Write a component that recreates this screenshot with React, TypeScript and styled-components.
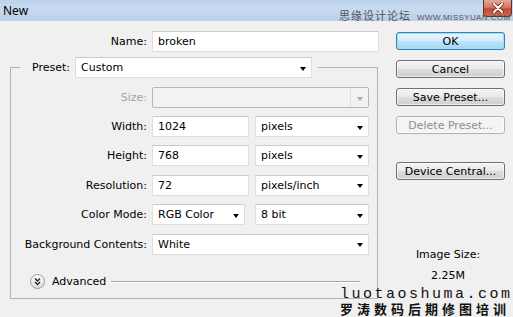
import React from 'react';
import styled, { createGlobalStyle } from 'styled-components';

const GlobalStyle = createGlobalStyle`
  html, body {
    margin: 0;
    padding: 0;
    background: #f0f0f0;
    overflow: hidden;
  }
  body {
    font-family: "DejaVu Sans", Tahoma, sans-serif;
    font-size: 11px;
    color: #000;
  }
`;

const Dialog = styled.div`
  position: relative;
  width: 513px;
  height: 317px;
  display: flex;
  flex-direction: column;
  background: #f0f0f0;
  overflow: hidden;
`;

const TitleBar = styled.div`
  position: relative;
  flex: none;
  height: 21px;
  display: flex;
  justify-content: space-between;
  padding: 0 1px 0 3px;
  background: linear-gradient(180deg, #bcd2eb 0%, #c8dbf0 45%, #b8cfe9 100%);
  .title {
    align-self: center;
    font-family: "Noto Sans", "Liberation Sans", sans-serif;
    font-size: 12px;
    color: #000;
    margin-top: -1px;
  }
`;

const CloseButton = styled.div`
  width: 29px;
  height: 17px;
  box-sizing: border-box;
  border: 1px solid #6e2b21;
  border-top: none;
  border-radius: 0 0 4px 4px;
  background: linear-gradient(180deg, #e6a797 0%, #d57a66 45%, #c24a34 55%, #cf6a4e 100%);
  display: flex;
  align-items: center;
  justify-content: center;
  svg { display: block; }
`;

const TopMark = styled.div`
  position: absolute;
  left: 339px;
  top: 7px;
  display: flex;
  align-items: baseline;
  gap: 6px;
  color: #555;
  pointer-events: none;
  .cn {
    font-family: "Noto Sans CJK SC", sans-serif;
    font-size: 11px;
    letter-spacing: 1px;
  }
  .url {
    font-family: "Liberation Sans", sans-serif;
    font-size: 8px;
    letter-spacing: 0.4px;
  }
`;

const BottomMark = styled.div`
  position: absolute;
  left: 340px;
  top: 287px;
  display: flex;
  flex-direction: column;
  color: #111;
  pointer-events: none;
  .en {
    font-family: "Liberation Mono", monospace;
    font-size: 15px;
    letter-spacing: 2.5px;
    line-height: 15px;
  }
  .cn {
    font-family: "Noto Sans CJK SC", sans-serif;
    font-size: 13px;
    font-weight: bold;
    letter-spacing: 4px;
    line-height: 14px;
  }
`;

const Body = styled.div`
  display: flex;
  flex: 1;
`;

const LeftPane = styled.div`
  width: 385px;
  padding-top: 10px;
  box-sizing: border-box;
`;

const RightPane = styled.div`
  width: 109px;
  margin-left: 11px;
  padding-top: 11px;
  display: flex;
  flex-direction: column;
  gap: 10px;
`;

const Row = styled.div<{ $outside?: boolean }>`
  display: grid;
  grid-template-columns: 136px auto;
  column-gap: 5px;
  align-items: center;
  height: 21px;
  margin-left: ${p => (p.$outside ? '11px' : '0')};
`;

const Label = styled.div<{ $disabled?: boolean }>`
  text-align: right;
  white-space: nowrap;
  color: ${p => (p.$disabled ? '#a3a3a3' : '#000')};
`;

const Fields = styled.div<{ $gap?: number }>`
  display: flex;
  gap: ${p => p.$gap ?? 6}px;
  align-items: center;
`;

const TextBox = styled.div<{ $w: number }>`
  width: ${p => p.$w}px;
  height: 21px;
  box-sizing: border-box;
  padding: 0 5px;
  line-height: 19px;
  background: #fff;
  border: 1px solid #dedede;
  border-top-color: #cbcbcb;
  white-space: nowrap;
`;

const SelectBox = styled.div<{ $w: number; $disabled?: boolean }>`
  width: ${p => p.$w}px;
  height: 21px;
  box-sizing: border-box;
  display: flex;
  align-items: center;
  background: ${p => (p.$disabled ? '#f2f2f2' : '#fff')};
  border: 1px solid ${p => (p.$disabled ? '#b7b7b7' : '#dedede')};
  border-top-color: ${p => (p.$disabled ? '#b7b7b7' : '#cbcbcb')};
  border-radius: ${p => (p.$disabled ? '2px' : '0')};
  .value {
    flex: 1;
    padding-left: 5px;
    white-space: nowrap;
  }
`;

const Arrow = styled.span<{ $disabled?: boolean }>`
  align-self: stretch;
  width: 17px;
  display: flex;
  align-items: center;
  justify-content: center;
  border-left: 1px solid ${p => (p.$disabled ? '#e2e2e2' : 'transparent')};
  &::after {
    content: '';
    margin-top: 2px;
    border-left: 3.5px solid transparent;
    border-right: 3.5px solid transparent;
    border-top: 4px solid ${p => (p.$disabled ? '#a8a8a8' : '#000')};
  }
`;

const Group = styled.fieldset`
  margin: 5px 0 0 10px;
  width: 368px;
  box-sizing: border-box;
  padding: 9px 0 8px 0;
  border: 1px solid #b4b4b4;
  border-radius: 0;
  min-width: 0;
`;

const Legend = styled.legend`
  margin-left: 9px;
  padding: 0 6px 0 12px;
  display: flex;
  align-items: center;
  gap: 5px;
`;

const Rows = styled.div`
  display: flex;
  flex-direction: column;
  gap: 8px;
  & > :nth-child(n + 3) { margin-top: 0.4px; }
`;

const AdvancedRow = styled.div`
  display: flex;
  align-items: center;
  height: 16px;
  margin: 19px 17px 0 19px;
  svg { display: block; flex: none; }
  .text { margin-left: 7px; }
  .rule {
    flex: 1;
    height: 1px;
    margin-left: 5px;
    background: #a7a7a7;
    box-shadow: 0 1px 0 #fff;
  }
`;

const Button = styled.div<{ $primary?: boolean; $disabled?: boolean }>`
  height: 18px;
  box-sizing: border-box;
  display: flex;
  align-items: center;
  justify-content: center;
  border-radius: 3px;
  white-space: nowrap;
  border: 1px solid ${p => (p.$primary ? '#3c7fb1' : p.$disabled ? '#adb2b5' : '#707070')};
  color: ${p => (p.$disabled ? '#8d8d8d' : '#000')};
  background: ${p =>
    p.$primary
      ? 'linear-gradient(180deg, #e5f5fd 0%, #d4eefc 48%, #bce4fa 52%, #a5d8f4 100%)'
      : p.$disabled
      ? '#f4f4f4'
      : 'linear-gradient(180deg, #f3f3f3 0%, #ebebeb 48%, #dddddd 52%, #cfcfcf 100%)'};
  box-shadow: ${p => (p.$primary ? 'inset 0 0 0 1px #9fdcf7' : 'inset 0 0 0 1px rgba(255,255,255,0.6)')};
`;

const Spacer = styled.div<{ $h: number }>`
  height: ${p => p.$h}px;
  flex: none;
`;

const SizeInfo = styled.div`
  display: flex;
  flex-direction: column;
  align-items: center;
  gap: 7px;
  line-height: 14px;
  margin-left: -5px;
`;

const AdvancedIcon = () => (
  <svg width="15" height="15" viewBox="0 0 15 15">
    <defs>
      <linearGradient id="adv" x1="0" y1="0" x2="0" y2="1">
        <stop offset="0" stopColor="#ffffff" />
        <stop offset="1" stopColor="#dcdcdc" />
      </linearGradient>
    </defs>
    <circle cx="7.5" cy="7.5" r="7" fill="url(#adv)" stroke="#9b9b9b" />
    <polyline points="5,4.5 7.5,7 10,4.5" fill="none" stroke="#222" strokeWidth="1.3" />
    <polyline points="5,8 7.5,10.5 10,8" fill="none" stroke="#222" strokeWidth="1.3" />
  </svg>
);

const Select = ({ w, value, disabled }: { w: number; value?: string; disabled?: boolean }) => (
  <SelectBox $w={w} $disabled={disabled}>
    <span className="value">{value}</span>
    <Arrow $disabled={disabled} />
  </SelectBox>
);

export default function App() {
  return (
    <Dialog>
      <GlobalStyle />
      <TitleBar>
        <span className="title">New</span>
        <CloseButton>
          <svg width="12" height="10" viewBox="0 0 12 10">
            <path d="M2 1 L10 9 M10 1 L2 9" stroke="#5a1e14" strokeWidth="3.4" strokeLinecap="round" />
            <path d="M2 1 L10 9 M10 1 L2 9" stroke="#fff" strokeWidth="2" strokeLinecap="round" />
          </svg>
        </CloseButton>
        <TopMark>
          <span className="cn">思缘设计论坛</span>
          <span className="url">WWW.MISSYUAN.COM</span>
        </TopMark>
      </TitleBar>

      <Body>
        <LeftPane>
          <Row $outside>
            <Label>Name:</Label>
            <TextBox $w={227}>broken</TextBox>
          </Row>

          <Group>
            <Legend>
              <span>Preset:</span>
              <Select w={237} value="Custom" />
            </Legend>
            <Rows>
              <Row>
                <Label $disabled>Size:</Label>
                <Select w={217} disabled />
              </Row>
              <Row>
                <Label>Width:</Label>
                <Fields>
                  <TextBox $w={97}>1024</TextBox>
                  <Select w={114} value="pixels" />
                </Fields>
              </Row>
              <Row>
                <Label>Height:</Label>
                <Fields>
                  <TextBox $w={97}>768</TextBox>
                  <Select w={114} value="pixels" />
                </Fields>
              </Row>
              <Row>
                <Label>Resolution:</Label>
                <Fields>
                  <TextBox $w={97}>72</TextBox>
                  <Select w={114} value="pixels/inch" />
                </Fields>
              </Row>
              <Row>
                <Label>Color Mode:</Label>
                <Fields $gap={10}>
                  <Select w={93} value="RGB Color" />
                  <Select w={114} value="8 bit" />
                </Fields>
              </Row>
              <Row>
                <Label>Background Contents:</Label>
                <Select w={217} value="White" />
              </Row>
            </Rows>
            <AdvancedRow>
              <AdvancedIcon />
              <span className="text">Advanced</span>
              <span className="rule" />
            </AdvancedRow>
          </Group>
        </LeftPane>

        <RightPane>
          <Button $primary>OK</Button>
          <Button>Cancel</Button>
          <Button>Save Preset...</Button>
          <Button $disabled>Delete Preset...</Button>
          <Spacer $h={8} />
          <Button>Device Central...</Button>
          <Spacer $h={48} />
          <SizeInfo>
            <span>Image Size:</span>
            <span>2.25M</span>
          </SizeInfo>
        </RightPane>
      </Body>

      <BottomMark>
        <span className="en">luotaoshuma.com</span>
        <span className="cn">罗涛数码后期修图培训</span>
      </BottomMark>
    </Dialog>
  );
}
